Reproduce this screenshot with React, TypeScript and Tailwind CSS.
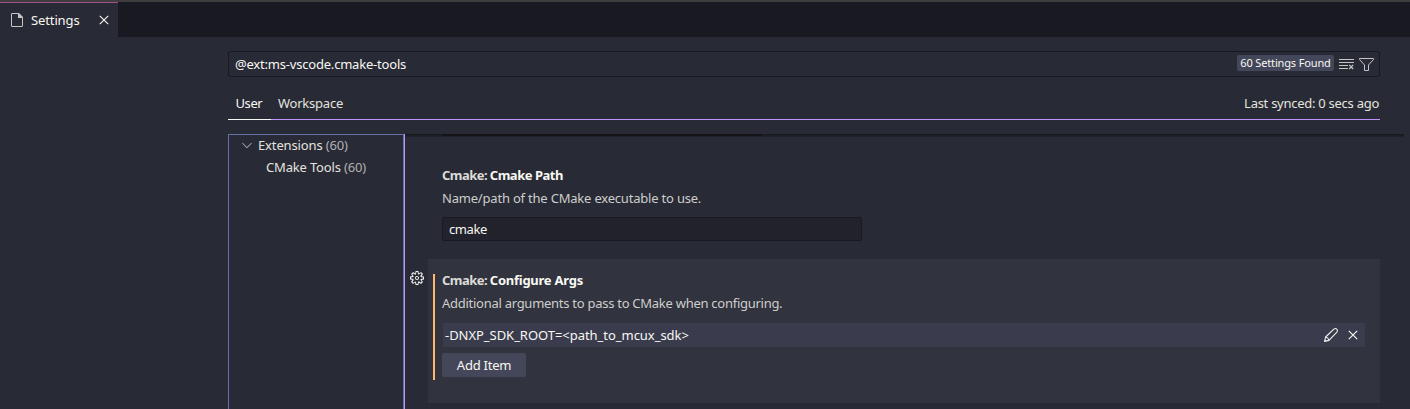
import React from "react";
import { VscChevronDown, VscGear } from "react-icons/vsc";

function FileIcon() {
  return (
    <svg className="h-[14px] w-3 shrink-0" viewBox="0 0 12 14" fill="none">
      <path d="M7.5 .5H1Q.5 .5 .5 1V13Q.5 13.5 1 13.5H11Q11.5 13.5 11.5 13V4.5Z" stroke="#c5c5c5" />
      <path d="M7 0H8L12 4V5H7Z" fill="#c5c5c5" />
    </svg>
  );
}

function ClearIcon() {
  return (
    <svg className="h-[11px] w-[15px] shrink-0" viewBox="0 0 15 11" fill="none" stroke="#c5c5c5">
      <path d="M0 .5H15M0 3.5H15M0 6.5H9M0 9.5H9" />
      <path d="M10.2 5.8L14.2 10M14.2 5.8L10.2 10" strokeWidth="1.2" />
    </svg>
  );
}

function FilterIcon() {
  return (
    <svg className="h-[13px] w-[15px] shrink-0" viewBox="0 0 15 13" fill="none" stroke="#c5c5c5">
      <path d="M.5 .5H14.5V1.5L9.5 7V12.5H5.5V7L.5 1.5Z" />
    </svg>
  );
}

function CloseIcon() {
  return (
    <svg className="size-4 shrink-0" viewBox="0 0 16 16" fill="none" stroke="#f8f8f2" strokeWidth="1.15">
      <path d="M3.8 3.8L12.2 12.2M12.2 3.8L3.8 12.2" />
    </svg>
  );
}

function PencilIcon() {
  return (
    <svg className="size-4 shrink-0" viewBox="0 0 16 16" fill="none" stroke="#f0f0eb" strokeWidth="1.1" strokeLinejoin="round">
      <path d="M1.6 14.4L2.6 10L10.9 2.1Q12.4 .9 13.8 2.2Q15.1 3.6 13.9 5.1L6 13.4Z" />
      <path d="M2.6 10Q5.4 10.6 6 13.4M1.6 14.4L3 12.8" />
    </svg>
  );
}

function Heading({ name, tracking }: { name: string; tracking: string }) {
  return (
    <h3 className={"whitespace-nowrap text-[13px] leading-[18px] font-bold text-[#f8f8f2] " + tracking}>
      <span className="tracking-[-0.55px] text-[#dcdcd8]">Cmake: </span>
      {name}
    </h3>
  );
}

export default function App() {
  return (
    <div className="flex h-[409px] w-[1410px] flex-col overflow-hidden bg-[#282a36] font-['Noto_Sans',sans-serif] text-[13px] leading-[18px] text-[#e4e4df]">
      <div className="h-[2px] shrink-0 bg-[#3d3d3d]" />
      <header className="flex h-[35px] shrink-0 bg-[#191a21]">
        <div className="flex w-[118px] items-center border-t border-[#a4508b] bg-[#282a36] pl-[11px] text-[#f8f8f2]">
          <FileIcon />
          <span className="ml-[8px] w-[65px] tracking-[-0.12px] whitespace-nowrap">Settings</span>
          <CloseIcon />
        </div>
      </header>

      <main className="flex min-h-0 flex-1 flex-col pt-[14px] pl-[228px]">
        <div className="flex h-[26px] w-[1152px] shrink-0 items-center rounded-[2px] border border-[#191a21] pr-[5px] pl-[6px]">
          <span className="flex-1 tracking-[-0.2px] text-[#f8f8f2]">@ext:ms-vscode.cmake-tools</span>
          <span className="mt-[-2px] h-4 w-[97px] rounded-[2px] bg-[#44475a] text-center text-[11px] leading-[16px] tracking-[-0.14px] whitespace-nowrap text-[#f8f8f2]">
            60 Settings Found
          </span>
          <span className="ml-[5px]"><ClearIcon /></span>
          <span className="ml-[5px]"><FilterIcon /></span>
        </div>

        <nav className="mt-[14px] flex h-[29px] w-[1152px] shrink-0">
          <div className="w-[43px] border-b border-[#f8f8f2] pt-[3px] pl-[7.5px] tracking-[-0.4px] text-[#f8f8f2]">User</div>
          <div className="flex flex-1 justify-between border-b border-[#bd93f9] pt-[3px] pr-px pl-[7px]">
            <span className="tracking-[-0.23px]">Workspace</span>
            <span className="tracking-[-0.27px]">Last synced: 0 secs ago</span>
          </div>
        </nav>

        <div className="mt-[14px] flex min-h-0 flex-1">
          <aside className="flex w-[176px] shrink-0 flex-col border-t border-r border-l border-[#6272a4]">
            <div className="flex h-5 items-center pl-[10px]">
              <VscChevronDown className="mr-[3px] size-4 text-[#a5a7b3]" />
              <span className="tracking-[-0.14px]">Extensions <span className="text-[#b0b1b3]">(60)</span></span>
            </div>
            <div className="flex h-6 items-center pl-[37px]">
              <span className="tracking-[-0.17px]">CMake Tools <span className="text-[#b0b1b3]">(60)</span></span>
            </div>
          </aside>

          <section className="flex w-[1000px] shrink-0 flex-col border-l border-[#bd93f9]">
            <div className="h-[3px] shrink-0 bg-linear-to-b from-[#16171d] to-[#22242e] pl-[37px]">
              <div className="h-[2px] w-[320px] rounded-b-[2px] bg-[#131318]" />
            </div>
            <div className="flex h-[122px] shrink-0 flex-col pt-[29px] pl-[37px]">
              <Heading name="Cmake Path" tracking="tracking-[-0.48px]" />
              <p className="mt-[5px] tracking-[-0.2px] text-[#cececa]">Name/path of the CMake executable to use.</p>
              <div className="mt-[10px] flex h-6 w-[420px] items-center rounded-[2px] border border-[#191a21] bg-[#21222c] pl-[6px] tracking-[-0.4px] text-[#f8f8f2]">
                cmake
              </div>
            </div>
            <div className="flex">
              <div className="w-[23px] pt-[11px] pl-[4px]">
                <VscGear className="size-4 text-[#f0f0eb]" />
              </div>
              <article className="flex h-[144px] w-[952px] bg-[#31333f] pl-[5px]">
                <div className="mt-[15px] h-[106px] w-[2px] bg-[#ffb86c]" />
                <div className="w-[923px] pt-[12px] pl-[7px]">
                  <Heading name="Configure Args" tracking="tracking-[-0.25px]" />
                  <p className="mt-[5px] tracking-[-0.27px] text-[#cececa]">Additional arguments to pass to CMake when configuring.</p>
                  <div className="mt-[11px] ml-px flex h-6 w-[922px] items-center bg-[#3a3c4e] pl-[2px] text-[#f8f8f2]">
                    <span className="flex-1 tracking-[-0.04px]">-DNXP_SDK_ROOT=&lt;path_to_mcux_sdk&gt;</span>
                    <span className="mr-[6px]"><PencilIcon /></span>
                    <span className="mr-[4px]"><CloseIcon /></span>
                  </div>
                  <button className="mt-[6px] block h-6 w-[84px] rounded-[2px] bg-[#44475a] tracking-[-0.25px] text-[#f8f8f2]">Add Item</button>
                </div>
              </article>
            </div>
          </section>
        </div>
      </main>
    </div>
  );
}
